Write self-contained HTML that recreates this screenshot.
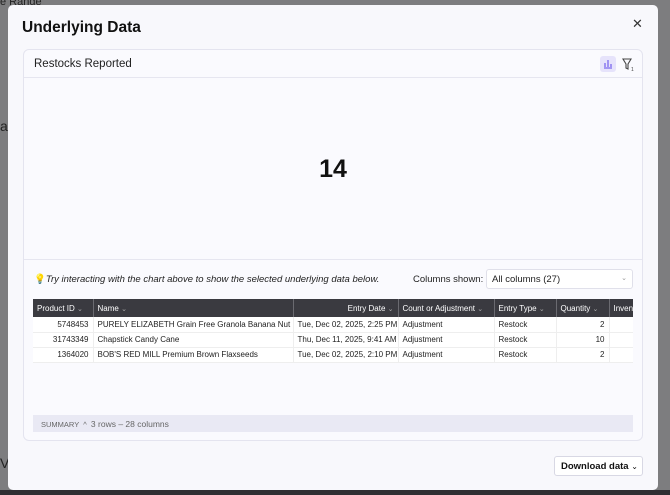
<!DOCTYPE html><html><head><style>
*{box-sizing:border-box;margin:0;padding:0}
body{width:670px;height:495px;overflow:hidden;background:#7d7d7f;font-family:"Liberation Sans",sans-serif;position:relative;color:#222}
.bg{position:absolute;color:#222;font-size:11px}
.modal{position:absolute;left:8px;top:5px;width:650px;height:485px;background:#f8f8fc;border-radius:5px}
.title{position:absolute;left:14px;top:14px;font-size:15.5px;font-weight:bold;color:#111}
.x{position:absolute;left:624px;top:11px;font-size:13px;color:#333}
.card{position:absolute;left:15px;top:44px;width:620px;height:392px;border:1px solid #e4e4ef;border-radius:6px;background:#fafafe}
.ch{height:28px;border-bottom:1px solid #e6e6f0;font-size:11.5px;padding:8px 10px;color:#222}
.num{position:absolute;left:0;width:100%;top:105px;text-align:center;font-size:25px;font-weight:bold;color:#111}
.div{position:absolute;left:0;top:209px;width:100%;border-top:1px solid #e6e6f0}
.hint{position:absolute;left:10px;top:224px;font-size:9.5px;font-style:italic;color:#222}
.cs{position:absolute;left:389px;top:224px;font-size:9.5px}
.sel{position:absolute;left:462px;top:219px;width:147px;height:20px;border:1px solid #e0e0ea;background:#fff;border-radius:3px;font-size:9.5px;padding:4px 5px}
.tw{position:absolute;left:9px;top:249px;width:600px;height:70px;overflow:hidden}
table{border-collapse:collapse;font-size:8px;table-layout:fixed;width:600px}
th{background:#3a3a40;color:#fff;height:18px;font-weight:normal;text-align:left;padding:0 4px;border-right:1px solid #6a6a70;white-space:nowrap;overflow:hidden}
td{background:#fff;height:15px;padding:0 4px;border-right:1px solid #eee;border-bottom:1px solid #eee;white-space:nowrap;overflow:hidden}
.r{text-align:right}
.c{color:#aaa;font-size:7px}
.sum{position:absolute;left:9px;top:365px;width:600px;height:17px;background:#e9e9f4;font-size:7.5px;color:#666;padding:4px 8px}
.dl{position:absolute;left:546px;top:451px;width:89px;height:20px;border:1px solid #d8d8e4;border-radius:3px;background:#fff;font-size:9.5px;font-weight:bold;padding:4px 6px;color:#111;white-space:nowrap}
</style></head><body>
<div class="bg" style="left:0;top:-4px">e Range</div>
<div class="bg" style="left:0;top:118px;font-size:14px">a</div>
<div class="bg" style="left:0;top:455px;font-size:14px">V</div>
<div style="position:absolute;left:0;top:490px;width:670px;height:5px;background:#2f2f33"></div>
<div class="modal">
<div class="title">Underlying Data</div>
<div class="x">✕</div>
<div class="card">
<div class="ch">Restocks Reported</div>
<div style="position:absolute;left:576px;top:6px;width:16px;height:16px;background:#e6e3fb;border-radius:3px"><svg width="16" height="16"><path d="M4 12h8M5 11V7M8 11V4M11 11V8" stroke="#7b68ee" stroke-width="1.3"/></svg></div>
<svg style="position:absolute;left:596px;top:6px" width="16" height="16"><path d="M3 3h8l-3 5v5l-2-1V8z" fill="none" stroke="#444" stroke-width="1.1"/><text x="11" y="15" font-size="5" fill="#444">1</text></svg>
<div class="num">14</div>
<div class="div"></div>
<div class="hint"><span style="color:#e8c030;font-style:normal">💡</span>Try interacting with the chart above to show the selected underlying data below.</div>
<div class="cs">Columns shown:</div>
<div class="sel">All columns (27)<span style="float:right;color:#999;font-size:7px">⌄</span></div>
<div class="tw"><table>
<colgroup><col style="width:60px"><col style="width:200px"><col style="width:105px"><col style="width:96px"><col style="width:62px"><col style="width:53px"><col style="width:24px"></colgroup>
<tr><th>Product ID <span class="c">⌄</span></th><th>Name <span class="c">⌄</span></th><th class="r">Entry Date <span class="c">⌄</span></th><th>Count or Adjustment <span class="c">⌄</span></th><th>Entry Type <span class="c">⌄</span></th><th>Quantity <span class="c">⌄</span></th><th>Inventory</th></tr>
<tr><td class="r">5748453</td><td>PURELY ELIZABETH Grain Free Granola Banana Nut ...</td><td class="r">Tue, Dec 02, 2025, 2:25 PM</td><td>Adjustment</td><td>Restock</td><td class="r">2</td><td></td></tr>
<tr><td class="r">31743349</td><td>Chapstick Candy Cane</td><td class="r">Thu, Dec 11, 2025, 9:41 AM</td><td>Adjustment</td><td>Restock</td><td class="r">10</td><td></td></tr>
<tr><td class="r">1364020</td><td>BOB'S RED MILL Premium Brown Flaxseeds</td><td class="r">Tue, Dec 02, 2025, 2:10 PM</td><td>Adjustment</td><td>Restock</td><td class="r">2</td><td></td></tr>
</table></div>
<div class="sum">SUMMARY &nbsp;^&nbsp; <span style="font-size:8.5px">3 rows – 28 columns</span></div>
</div>
<div class="dl">Download data <span style="font-weight:normal;font-size:8px">⌄</span></div>
</div>
</body></html>
